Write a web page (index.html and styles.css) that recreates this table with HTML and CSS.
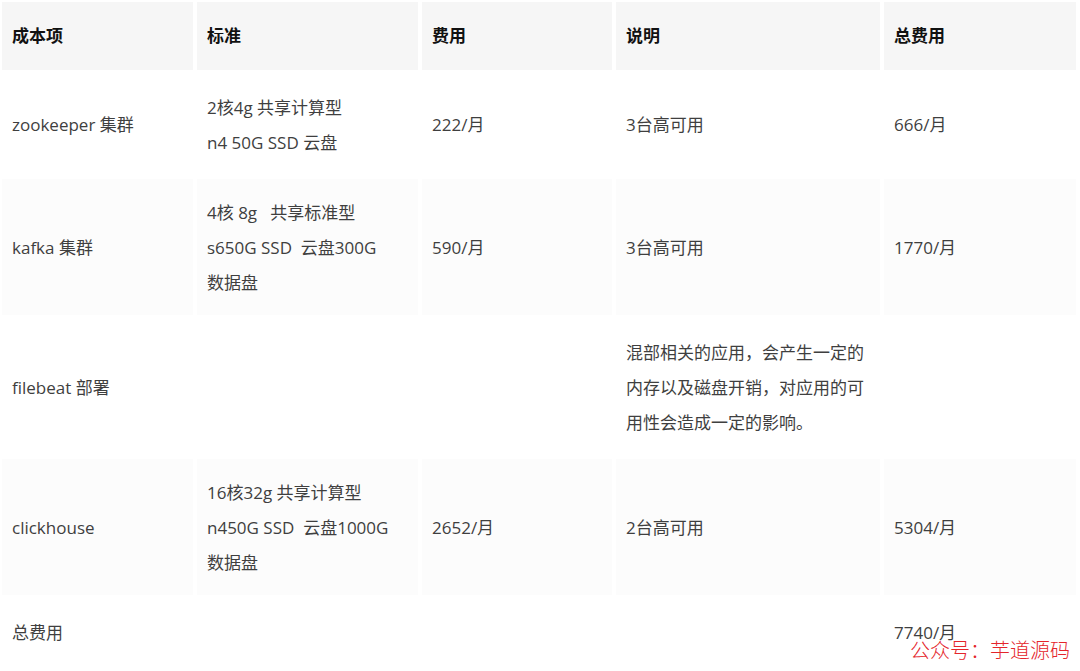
FILE: index.html
```html
<!DOCTYPE html>
<html>
<head>
    <meta charset="UTF-8">
    <title>成本项</title>
    <link rel="stylesheet" href="styles.css">
</head>
<body>
    <div class="page">
        <table class="cost-table">
            <colgroup>
                <col class="c-item">
                <col class="c-spec">
                <col class="c-fee">
                <col class="c-note">
                <col class="c-total">
            </colgroup>
            <thead>
                <tr>
                    <th>成本项</th>
                    <th>标准</th>
                    <th>费用</th>
                    <th>说明</th>
                    <th>总费用</th>
                </tr>
            </thead>
            <tbody>
                <tr>
                    <td>zookeeper 集群</td>
                    <td>2核4g 共享计算型<br>n4 50G SSD 云盘</td>
                    <td>222/月</td>
                    <td>3台高可用</td>
                    <td>666/月</td>
                </tr>
                <tr>
                    <td>kafka 集群</td>
                    <td>4核 8g &nbsp; 共享标准型<br>s650G SSD &nbsp;云盘300G<br>数据盘</td>
                    <td>590/月</td>
                    <td>3台高可用</td>
                    <td>1770/月</td>
                </tr>
                <tr>
                    <td>filebeat 部署</td>
                    <td></td>
                    <td></td>
                    <td>混部相关的应用，会产生一定的<br>内存以及磁盘开销，对应用的可<br>用性会造成一定的影响。</td>
                    <td></td>
                </tr>
                <tr>
                    <td>clickhouse</td>
                    <td>16核32g 共享计算型<br>n450G SSD &nbsp;云盘1000G<br>数据盘</td>
                    <td>2652/月</td>
                    <td>2台高可用</td>
                    <td>5304/月</td>
                </tr>
                <tr>
                    <td>总费用</td>
                    <td></td>
                    <td></td>
                    <td></td>
                    <td>7740/月</td>
                </tr>
            </tbody>
        </table>
        <div class="watermark">公众号：芋道源码</div>
    </div>
</body>
</html>
```

FILE: styles.css
```css
body {
    margin: 0;
    background-color: #fff;
    font-family: "Open Sans", "Noto Sans CJK SC", sans-serif;
    overflow: hidden;
}
.page {
    position: relative;
    width: 1080px;
    height: 671px;
    overflow: hidden;
}
.cost-table {
    table-layout: fixed;
    width: 1082px;
    margin: -2px;
    border-collapse: separate;
    border-spacing: 4px;
    font-size: 17px;
    line-height: 35px;
    color: #3f3f3f;
}
.c-item { width: 191px; }
.c-spec { width: 221px; }
.c-fee { width: 190px; }
.c-note { width: 264px; }
.c-total { width: 192px; }
.cost-table th,
.cost-table td {
    padding: 15.5px 10px;
    text-align: left;
    vertical-align: middle;
}
.cost-table th {
    padding: 16px 10px 17px;
    background-color: #f6f6f6;
    color: #111;
    font-weight: 700;
}
.cost-table tbody tr:nth-child(even) td {
    background-color: #fcfcfc;
}
.watermark {
    position: absolute;
    left: 910px;
    top: 637px;
    font-size: 20px;
    line-height: 28px;
    color: #e4252b;
    font-weight: 300;
}
```
